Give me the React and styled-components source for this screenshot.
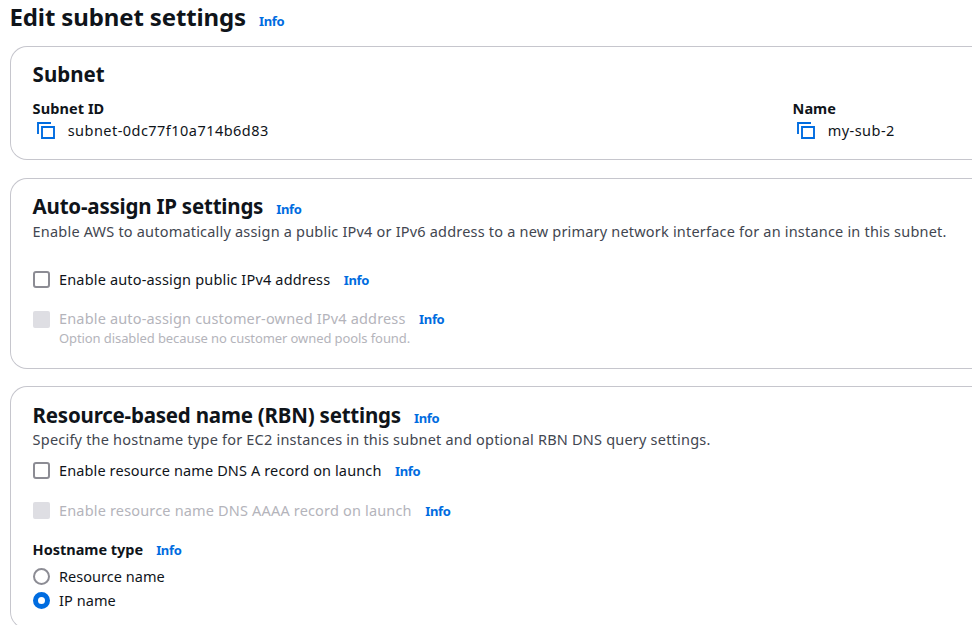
import React from "react";
import styled, { createGlobalStyle } from "styled-components";

const GlobalStyle = createGlobalStyle`
  * { box-sizing: border-box; }
  html, body { margin: 0; height: 100%; overflow: hidden; background: #fff; }
  body {
    font-family: "Noto Sans", "Open Sans", sans-serif;
    font-size: 14.5px;
    color: #0f141a;
    white-space: nowrap;
  }
`;

const Page = styled.main`
  height: 100vh;
  overflow: hidden;
  padding-left: 10px;
`;

const TitleRow = styled.header`
  display: flex;
  align-items: baseline;
  gap: 13px;
  height: 46px;
  margin-left: -0.5px;
`;

const Title = styled.h1`
  margin: 0;
  font-size: 24px;
  line-height: 33px;
  font-weight: 700;
  letter-spacing: -0.13px;
`;

const Card = styled.section`
  height: ${(p) => p.$height}px;
  margin-bottom: ${(p) => p.$gap || 0}px;
  padding: ${(p) => p.$top || 13}px 0 0 21.6px;
  border: 1px solid #c6c6cd;
  border-right: 0;
  border-radius: 17px 0 0 17px;
`;

const HeadingRow = styled.div`
  display: flex;
  align-items: baseline;
  gap: 13px;
  height: 28px;
`;

const Heading = styled.h2`
  margin: 0;
  font-size: 20.5px;
  line-height: 28px;
  font-weight: 700;
  letter-spacing: ${(p) => p.$spacing || 0}px;
`;

const InfoLink = styled.a`
  color: #006ce0;
  font-size: 13px;
  line-height: 18px;
  font-weight: 700;
  letter-spacing: -0.35px;
  text-decoration: none;
`;

const Description = styled.p`
  margin: ${(p) => p.$shift || 0}px 0 0;
  line-height: 22px;
  letter-spacing: ${(p) => p.$spacing}px;
  color: #424650;
`;

const Columns = styled.div`
  display: grid;
  grid-template-columns: 760px 1fr;
  padding-top: 10px;
`;

const FieldLabel = styled.div`
  line-height: 20px;
  font-weight: 700;
  letter-spacing: ${(p) => p.$spacing}px;
`;

const FieldValue = styled.div`
  display: flex;
  align-items: center;
  gap: 12.5px;
  height: 24px;
  line-height: 24px;
  padding-left: 4.6px;
  letter-spacing: 0.46px;
`;

const CopyGlyph = styled.svg`
  display: block;
  width: 18px;
  height: 18px;
  fill: none;
  stroke: #006ce0;
  stroke-width: 1.9;
`;

const Options = styled.div`
  display: flex;
  flex-direction: column;
  padding-top: ${(p) => p.$top}px;
  gap: ${(p) => p.$gap}px;
`;

const Option = styled.div`
  display: flex;
  align-items: center;
  height: 19px;
  line-height: 19px;
  padding-left: 0.4px;
`;

const OptionText = styled.div`
  display: flex;
  align-items: baseline;
  gap: 13.5px;
  margin: 0 0 ${(p) => (p.$raised ? 2 : 0)}px 9px;
`;

const OptionLabel = styled.span`
  letter-spacing: ${(p) => p.$spacing}px;
  color: ${(p) => (p.$disabled ? "#b4b4bb" : "#0f141a")};
`;

const OptionNote = styled.div`
  padding-left: 26.4px;
  font-size: 13px;
  line-height: 18px;
  letter-spacing: -0.09px;
  color: #b4b4bb;
`;

const Checkbox = styled.span`
  flex: none;
  width: 17px;
  height: 17px;
  border-radius: ${(p) => (p.$disabled ? 2 : 3)}px;
  border: 2px solid ${(p) => (p.$disabled ? "#dedee3" : "#8c8c94")};
  background: ${(p) => (p.$disabled ? "#dedee3" : "#fff")};
`;

const Radio = styled.span`
  flex: none;
  width: 17px;
  height: 17px;
  border-radius: 50%;
  background: #fff;
  border: ${(p) => (p.$checked ? "5px solid #006ce0" : "2px solid #8c8c94")};
`;

const GroupLabel = styled.div`
  display: flex;
  align-items: baseline;
  gap: 13px;
  height: 20px;
  margin: 19px 0 8px;
`;

const CopyIcon = () => (
  <CopyGlyph viewBox="0 0 18 18">
    <path d="M1 13V2h13" />
    <path d="M5 6h12v11H5z" />
  </CopyGlyph>
);

const Info = () => <InfoLink>Info</InfoLink>;

function CheckOption({ label, spacing, disabled, note }) {
  return (
    <div>
      <Option>
        <Checkbox $disabled={disabled} />
        <OptionText $raised={Boolean(note)}>
          <OptionLabel $spacing={spacing} $disabled={disabled}>{label}</OptionLabel>
          <Info />
        </OptionText>
      </Option>
      {note && <OptionNote>{note}</OptionNote>}
    </div>
  );
}

function RadioOption({ label, spacing, checked }) {
  return (
    <Option>
      <Radio $checked={checked} />
      <OptionText>
        <OptionLabel $spacing={spacing}>{label}</OptionLabel>
      </OptionText>
    </Option>
  );
}

export default function App() {
  return (
    <>
      <GlobalStyle />
      <Page>
        <TitleRow>
          <Title>Edit subnet settings</Title>
          <Info />
        </TitleRow>

        <Card $height={114} $gap={18}>
          <HeadingRow>
            <Heading>Subnet</Heading>
          </HeadingRow>
          <Columns>
            <div>
              <FieldLabel $spacing={0.08}>Subnet ID</FieldLabel>
              <FieldValue><CopyIcon />subnet-0dc77f10a714b6d83</FieldValue>
            </div>
            <div>
              <FieldLabel $spacing={0}>Name</FieldLabel>
              <FieldValue><CopyIcon />my-sub-2</FieldValue>
            </div>
          </Columns>
        </Card>

        <Card $height={191} $gap={17}>
          <HeadingRow>
            <Heading $spacing={-0.21}>Auto-assign IP settings</Heading>
            <Info />
          </HeadingRow>
          <Description $spacing={0.195}>
            Enable AWS to automatically assign a public IPv4 or IPv6 address to a new primary network interface for an instance in this subnet.
          </Description>
          <Options $top={28} $gap={21}>
            <CheckOption label="Enable auto-assign public IPv4 address" spacing={0.17} />
            <CheckOption
              label="Enable auto-assign customer-owned IPv4 address"
              spacing={0.17}
              disabled
              note="Option disabled because no customer owned pools found."
            />
          </Options>
        </Card>

        <Card $height={243} $top={14}>
          <HeadingRow>
            <Heading $spacing={-0.21}>Resource-based name (RBN) settings</Heading>
            <Info />
          </HeadingRow>
          <Description $spacing={0.205} $shift={-1}>
            Specify the hostname type for EC2 instances in this subnet and optional RBN DNS query settings.
          </Description>
          <Options $top={11} $gap={21}>
            <CheckOption label="Enable resource name DNS A record on launch" spacing={0.125} />
            <CheckOption label="Enable resource name DNS AAAA record on launch" spacing={0.17} disabled />
          </Options>
          <GroupLabel>
            <FieldLabel $spacing={-0.02}>Hostname type</FieldLabel>
            <Info />
          </GroupLabel>
          <Options $top={0} $gap={5}>
            <RadioOption label="Resource name" spacing={0.03} />
            <RadioOption label="IP name" spacing={0.07} checked />
          </Options>
        </Card>
      </Page>
    </>
  );
}
